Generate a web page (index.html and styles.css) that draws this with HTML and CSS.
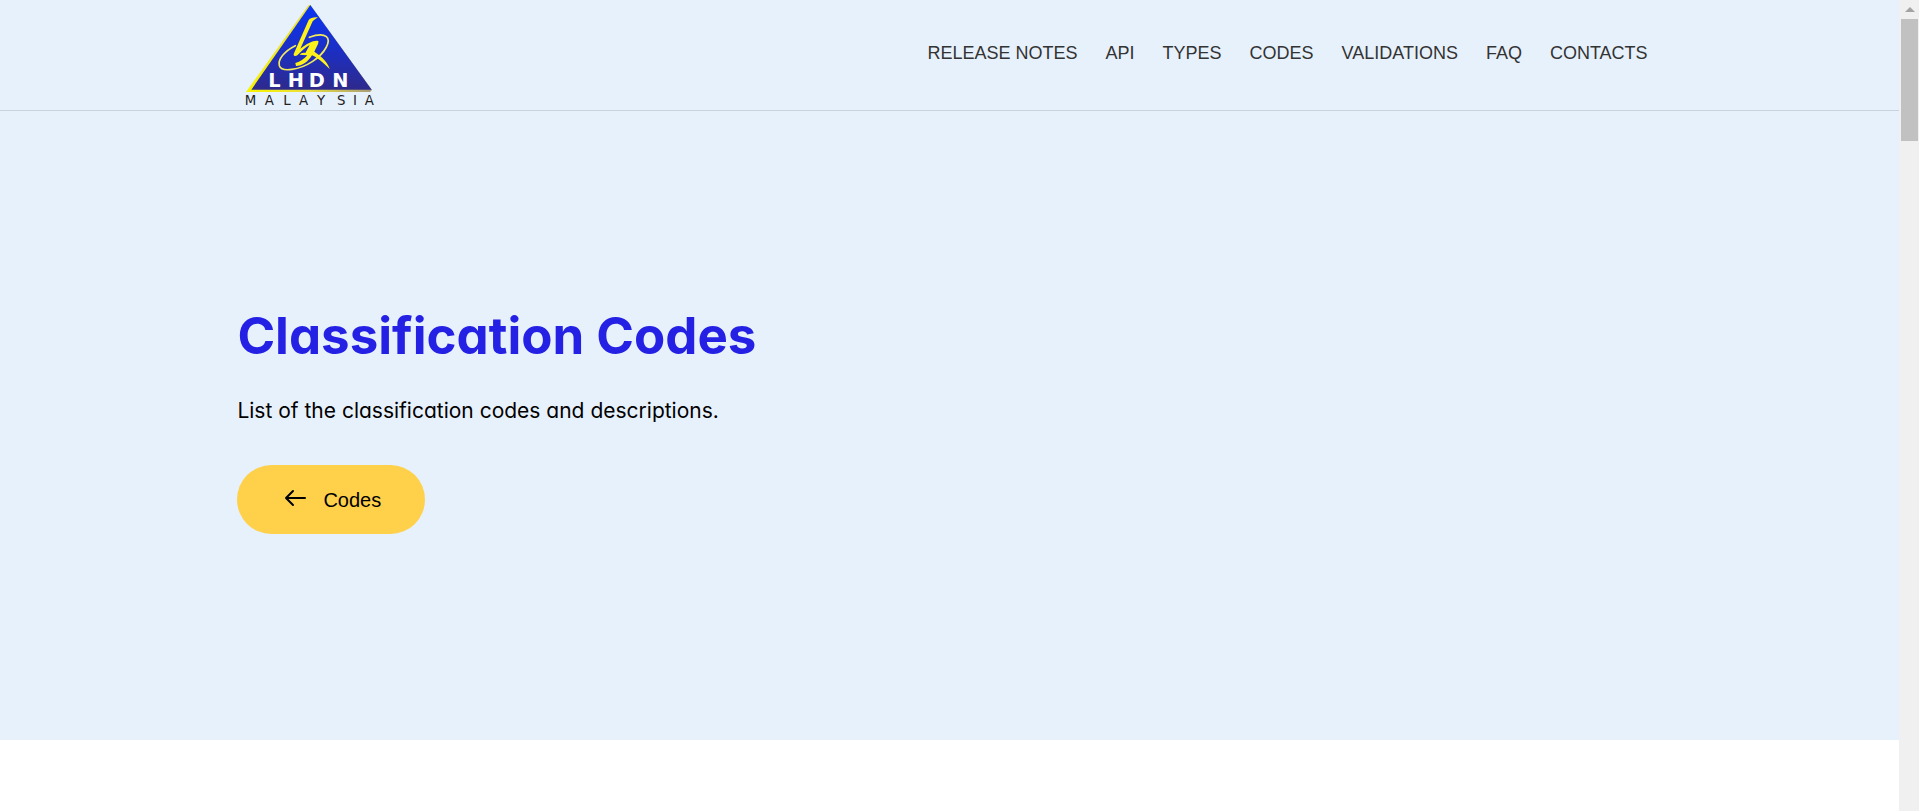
FILE: index.html
```html
<!DOCTYPE html>
<html lang="en">

<head>
    <meta charset="UTF-8">
    <meta name="viewport" content="width=device-width, initial-scale=1.0">
    <title>Classification Codes</title>
    <link rel="stylesheet" href="styles.css">
</head>

<body>
    <div class="page">
        <header class="header">
            <div class="container header-inner">
                <a href="#" class="logo" aria-label="LHDN Malaysia">
                    <svg viewBox="45 12 393 309" width="131" height="103">
                        <defs>
                            <linearGradient id="blue" x1="0" y1="0" x2="0" y2="1">
                                <stop offset="0" stop-color="#0a35f5" />
                                <stop offset="0.5" stop-color="#1a2fc8" />
                                <stop offset="1" stop-color="#2e2a8c" />
                            </linearGradient>
                            <linearGradient id="gold" x1="0" y1="0" x2="1" y2="0">
                                <stop offset="0" stop-color="#f8f400" />
                                <stop offset="0.5" stop-color="#e9df3a" />
                                <stop offset="1" stop-color="#a89c78" />
                            </linearGradient>
                        </defs>
                        <path d="M235 16L48 276H420L426 270L241 15Z" fill="url(#gold)" />
                        <path d="M241 15L64 269H425Z" fill="url(#blue)" />
                        <path class="logo-ring" d="M196 137C164 153 143 178 148 197C155 218 208 210 248 184C287 158 304 122 289 110C279 102 257 105 238 112" />
                        <path d="M264 52C251 51 241 53 236 60L191 162C190 168 196 170 202 166C214 153 228 141 239 135L226 159C219 157 212 160 209 164L232 166C222 178 208 187 196 189L198 198C216 198 235 185 246 166C264 174 277 187 299 207C296 193 280 172 253 155C260 140 267 129 265 123C254 119 232 129 211 146L248 64C252 59 258 57 264 52Z" fill="#fff21a" />
                        <text class="logo-name" x="115 173 236 307" y="262">LHDN</text>
                        <text class="logo-country" x="44 104 160 207 261 321 369 404" y="315">MALAYSIA</text>
                    </svg>
                </a>
                <nav class="nav">
                    <a href="#">RELEASE NOTES</a>
                    <a href="#">API</a>
                    <a href="#">TYPES</a>
                    <a href="#">CODES</a>
                    <a href="#">VALIDATIONS</a>
                    <a href="#">FAQ</a>
                    <a href="#">CONTACTS</a>
                </nav>
            </div>
        </header>
        <main class="hero">
            <div class="container">
                <h1 class="title">Classification Codes</h1>
                <p class="subtitle">List of the classification codes and descriptions.</p>
                <a href="#" class="btn">
                    <svg class="btn-icon" viewBox="0 0 22 18" width="22" height="18">
                        <path d="M9 2L2 9L9 16M2 9H21" />
                    </svg>
                    Codes
                </a>
            </div>
        </main>
    </div>
    <div class="scrollbar">
        <div class="scrollbar-arrow"></div>
        <div class="scrollbar-thumb"></div>
    </div>
</body>

</html>
```
FILE: styles.css
```css
* {
    box-sizing: border-box;
}

body {
    display: flex;
    min-height: 100vh;
    margin: 0;
    background-color: #fff;
    font-family: "Liberation Sans", Arial, sans-serif;
}

a {
    text-decoration: none;
}

.page {
    flex: 1;
}

.container {
    width: 75%;
    margin: 0 auto;
}

.header {
    background-color: #e7f1fc;
    border-bottom: 1px solid #c8d3df;
}

.header-inner {
    display: flex;
    justify-content: space-between;
    align-items: flex-start;
    padding: 4px 14px 3px 8px;
}

.logo svg {
    display: block;
}

.logo-ring {
    fill: none;
    stroke: #f2ea5a;
    stroke-width: 5;
    stroke-linecap: round;
}

.logo-name {
    fill: #fff;
    font-family: "DejaVu Sans", sans-serif;
    font-size: 58px;
    font-weight: bold;
}

.logo-country {
    fill: #222;
    font-family: "DejaVu Sans", sans-serif;
    font-size: 40px;
}

.nav {
    display: flex;
    gap: 28px;
    padding-top: 38px;
}

.nav a {
    color: #333;
    font-size: 18px;
    line-height: 22px;
}

.hero {
    padding: 193px 0 206px;
    background-color: #e7f1fc;
}

.title {
    margin: 0 0 28px;
    color: #2420e4;
    font-family: Inter, sans-serif;
    font-size: 51px;
    font-weight: 700;
    line-height: 64px;
    font-feature-settings: "cv11";
}

.subtitle {
    margin: 0 0 39px;
    color: #000;
    font-family: Inter, sans-serif;
    font-size: 21px;
    line-height: 30px;
    font-feature-settings: "cv11";
}

.btn {
    display: inline-flex;
    align-items: center;
    gap: 17px;
    padding: 23px 44px 22px 47px;
    border-radius: 35px;
    background-color: #ffd04a;
    color: #000;
    font-size: 20px;
    line-height: 24px;
}

.btn-icon {
    margin-bottom: 5px;
    fill: none;
    stroke: #000;
    stroke-width: 2;
    stroke-linecap: round;
    stroke-linejoin: round;
}

.scrollbar {
    width: 20px;
    padding: 7px 1px 0 2px;
    background-color: #f0f0f0;
}

.scrollbar-arrow {
    width: 0;
    margin: 0 auto 7px;
    border: 5px solid transparent;
    border-top: 0;
    border-bottom-color: #a3a3a3;
}

.scrollbar-thumb {
    height: 122px;
    background-color: #c1c1c1;
}
```
